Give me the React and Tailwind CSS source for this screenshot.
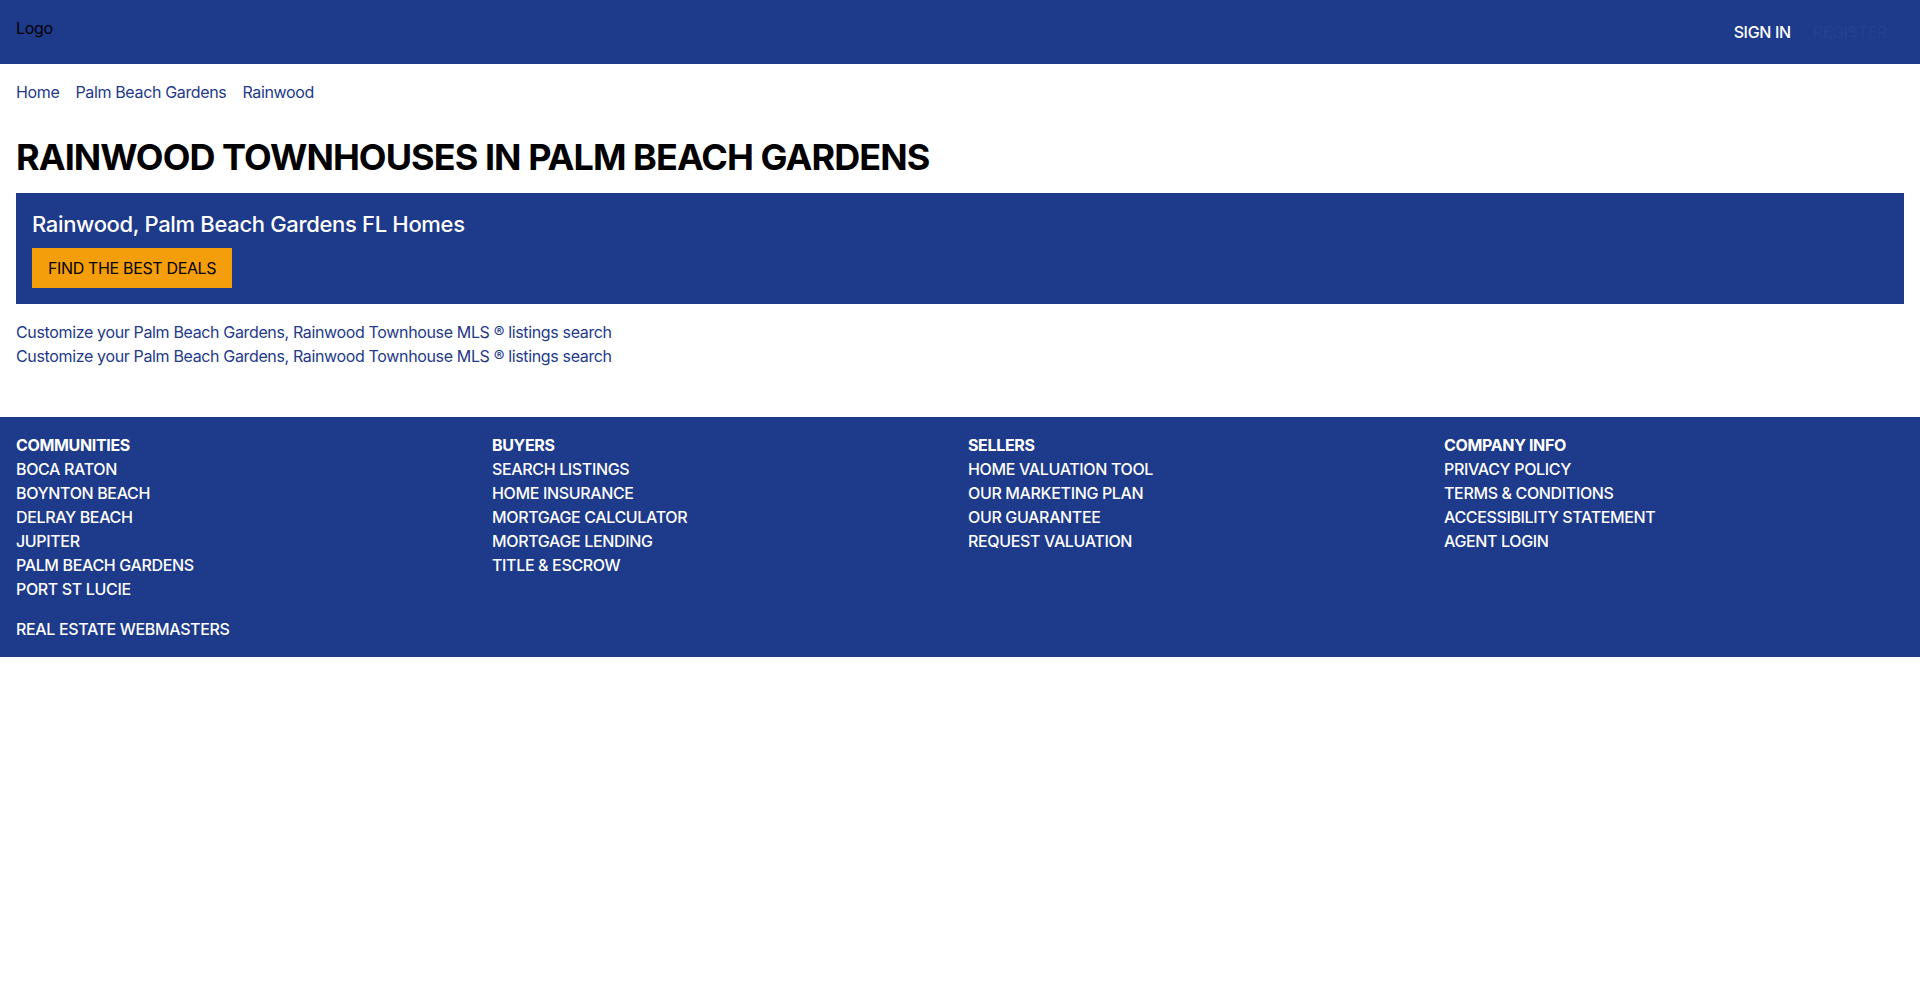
import React from 'react';

const footerCols = [
    { title: 'COMMUNITIES', links: ['BOCA RATON', 'BOYNTON BEACH', 'DELRAY BEACH', 'JUPITER', 'PALM BEACH GARDENS', 'PORT ST LUCIE'] },
    { title: 'BUYERS', links: ['SEARCH LISTINGS', 'HOME INSURANCE', 'MORTGAGE CALCULATOR', 'MORTGAGE LENDING', 'TITLE & ESCROW'] },
    { title: 'SELLERS', links: ['HOME VALUATION TOOL', 'OUR MARKETING PLAN', 'OUR GUARANTEE', 'REQUEST VALUATION'] },
    { title: 'COMPANY INFO', links: ['PRIVACY POLICY', 'TERMS & CONDITIONS', 'ACCESSIBILITY STATEMENT', 'AGENT LOGIN'] },
];

const App = () => {
    return (
        <div className="min-h-screen w-full bg-white font-['Inter',sans-serif] text-base leading-6 tracking-[-0.022em]">
            {/* Header */}
            <header className="h-16 bg-[#1e3a8a] flex items-start justify-between px-4">
                <a href="#" className="pt-4 text-black">Logo</a>
                <nav className="h-16 flex items-center gap-[22px] pr-[17px] font-medium">
                    <a href="#" className="text-white">SIGN IN</a>
                    <a href="#" className="text-[#22408e]">REGISTER</a>
                </nav>
            </header>

            {/* Breadcrumbs */}
            <div className="px-4 pt-4 flex items-center gap-4 text-[#1e3a8a]">
                <a href="#">Home</a>
                <a href="#">Palm Beach Gardens</a>
                <a href="#">Rainwood</a>
            </div>

            <main className="px-4">
                <h1 className="mt-[33px] text-4xl leading-10 font-bold text-black tracking-[-0.026em]">RAINWOOD TOWNHOUSES IN PALM BEACH GARDENS</h1>

                {/* Banner */}
                <div className="mt-4 bg-[#1e3a8a] px-4 pt-[15px] pb-4">
                    <h2 className="text-[22px] leading-8 font-medium text-white tracking-[-0.015em]">Rainwood, Palm Beach Gardens FL Homes</h2>
                    <button className="mt-2 h-10 px-4 bg-[#f59e0b] text-black">FIND THE BEST DEALS</button>
                </div>

                <div className="pt-4 pb-[49px] flex flex-col text-[#1e3a8a]">
                    <a href="#">Customize your Palm Beach Gardens, Rainwood Townhouse MLS ® listings search</a>
                    <a href="#">Customize your Palm Beach Gardens, Rainwood Townhouse MLS ® listings search</a>
                </div>
            </main>

            {/* Footer */}
            <footer className="bg-[#1e3a8a] text-white px-4 py-4">
                <div className="grid grid-cols-4 gap-4">
                    {footerCols.map((col) => (
                        <div key={col.title} className="flex flex-col">
                            <span className="font-bold">{col.title}</span>
                            {col.links.map((l) => (
                                <a key={l} href="#" className="font-medium">{l}</a>
                            ))}
                        </div>
                    ))}
                </div>
                <a href="#" className="block mt-4 font-medium">REAL ESTATE WEBMASTERS</a>
            </footer>
        </div>
    );
};

export default App;
